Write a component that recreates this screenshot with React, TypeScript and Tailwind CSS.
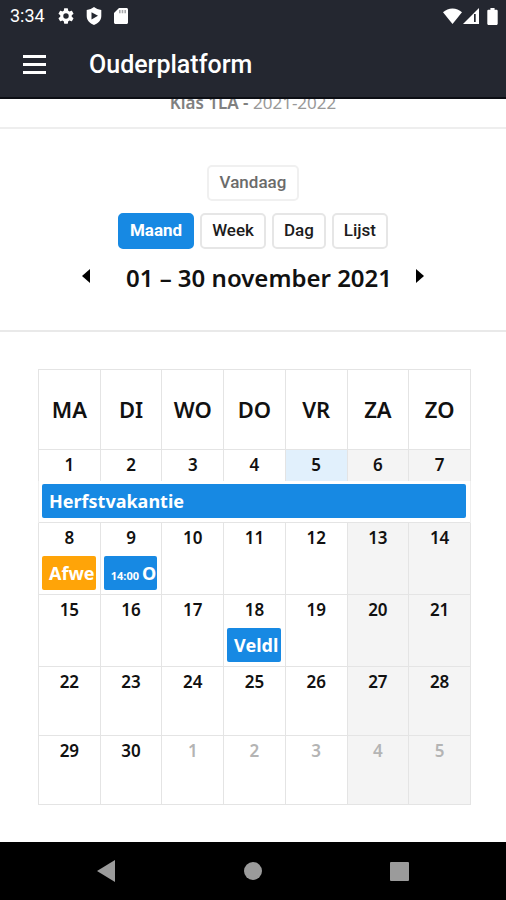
import { clsx } from 'clsx'

type CalendarEvent = {
  title: string
  time?: string
  color: 'blue' | 'orange'
}

type Week = {
  days: number[]
  height: string
  allWeek?: CalendarEvent
  events?: Record<number, CalendarEvent>
}

const VIEWS = ['Maand', 'Week', 'Dag', 'Lijst']
const WEEKDAYS = ['MA', 'DI', 'WO', 'DO', 'VR', 'ZA', 'ZO']
const TODAY = 5

const WEEKS: Week[] = [
  {
    days: [1, 2, 3, 4, 5, 6, 7],
    height: 'h-[31px]',
    allWeek: { title: 'Herfstvakantie', color: 'blue' },
  },
  {
    days: [8, 9, 10, 11, 12, 13, 14],
    height: 'h-[72px]',
    events: {
      8: { title: 'Afwe', color: 'orange' },
      9: { title: 'O', time: '14:00', color: 'blue' },
    },
  },
  {
    days: [15, 16, 17, 18, 19, 20, 21],
    height: 'h-[72px]',
    events: { 18: { title: 'Veldl', color: 'blue' } },
  },
  { days: [22, 23, 24, 25, 26, 27, 28], height: 'h-[69px]' },
  { days: [29, 30, 1, 2, 3, 4, 5], height: 'h-[69px]' },
]

function StatusBar() {
  return (
    <div className="flex h-8 items-center justify-between pl-[10px] pr-2 text-white">
      <div className="flex items-center">
        <span className="w-12 text-[18px] leading-8">3:34</span>
        <svg className="h-4 w-4" viewBox="2 2 20 20" fill="currentColor">
          <path d="M19.14 12.94c.04-.3.06-.61.06-.94 0-.32-.02-.64-.07-.94l2.03-1.58a.49.49 0 0 0 .12-.61l-1.92-3.32a.488.488 0 0 0-.59-.22l-2.39.96c-.5-.38-1.03-.7-1.62-.94l-.36-2.54a.484.484 0 0 0-.48-.41h-3.84c-.24 0-.43.17-.47.41l-.36 2.54c-.59.24-1.13.57-1.62.94l-2.39-.96c-.22-.08-.47 0-.59.22L2.74 8.87c-.12.21-.08.47.12.61l2.03 1.58c-.05.3-.09.63-.09.94s.02.64.07.94l-2.03 1.58a.49.49 0 0 0-.12.61l1.92 3.32c.12.22.37.29.59.22l2.39-.96c.5.38 1.03.7 1.62.94l.36 2.54c.05.24.24.41.48.41h3.84c.24 0 .44-.17.47-.41l.36-2.54c.59-.24 1.13-.56 1.62-.94l2.39.96c.22.08.47 0 .59-.22l1.92-3.32c.12-.22.07-.47-.12-.61l-2.01-1.58zM12 15.4a3.4 3.4 0 1 1 0-6.8 3.4 3.4 0 0 1 0 6.8z" />
        </svg>
        <svg className="ml-3 h-[18px] w-4" viewBox="0 0 16 18">
          <path d="M8 0C6 1.600 3.500 2.600 .7 3v6c0 4.300 3 7.300 7.300 9 4.300-1.700 7.300-4.700 7.300-9V3C12.500 2.600 10 1.600 8 0z" fill="currentColor" />
          <path d="M5.500 5.200v7.200l6.500-3.600z" fill="#242730" />
        </svg>
        <svg className="ml-3 h-4 w-[14px]" viewBox="0 0 14 16">
          <path d="M5 0h7.500c.8 0 1.500.7 1.500 1.500v13c0 .8-.7 1.500-1.500 1.500h-11C.7 16 0 15.300 0 14.500V5z" fill="currentColor" />
          <path d="M5 2h1.600v3.200H5zM7.700 2h1.600v3.200H7.700zM10.400 2H12v3.200h-1.600z" fill="#242730" opacity=".4" />
        </svg>
      </div>
      <div className="flex items-center">
        <svg className="h-4 w-[19px]" viewBox="0 0 19 16" fill="currentColor">
          <path d="M9.500 16 0 4.200C2.600 1.700 6 .4 9.500.4S16.400 1.700 19 4.200z" />
        </svg>
        <svg className="ml-px h-4 w-4" viewBox="0 0 16 16">
          <path d="M16 0v16H0z" fill="currentColor" />
          <path d="M11 6h1.700v8H11z" fill="#242730" />
        </svg>
        <svg className="ml-2 h-[17px] w-[11px]" viewBox="0 0 11 18" fill="currentColor">
          <path d="M3.300 0h4.400v1.800h2c.7 0 1.300.6 1.300 1.300v13.600c0 .7-.6 1.300-1.300 1.300H1.300C.6 18 0 17.400 0 16.700V3.100c0-.7.6-1.300 1.300-1.300h2z" />
        </svg>
      </div>
    </div>
  )
}

function Header() {
  return (
    <header className="relative z-10 border-b-2 border-[#0c0e14] bg-[#242730] font-[Roboto,sans-serif]">
      <StatusBar />
      <div className="flex h-[65px] items-center px-[23px] pb-1 pt-1 text-white">
        <button aria-label="Menu" className="mr-[43px] flex w-[23px] flex-col gap-[5px]">
          <span className="h-[3px] w-full bg-white" />
          <span className="h-[3px] w-full bg-white" />
          <span className="h-[3px] w-full bg-white" />
        </button>
        <h1 className="text-[25px] font-medium leading-8">Ouderplatform</h1>
      </div>
    </header>
  )
}

function Toolbar() {
  return (
    <section className="flex flex-col items-center border-b-2 border-[#e9e9e9] pb-9 pt-9">
      <button
        disabled
        className="h-9 rounded-[5px] border-2 border-[#f0f0f0] px-[11px] font-[Roboto,sans-serif] text-[17px] font-medium text-[#6b6b6b]"
      >
        Vandaag
      </button>
      <div className="mt-3 flex gap-[6px] font-[Roboto,sans-serif] text-[17px]">
        {VIEWS.map((view, i) => (
          <button
            key={view}
            className={clsx(
              'h-9 rounded-[5px] border-2 px-[10px]',
              i === 0
                ? 'border-[#1789e3] bg-[#1789e3] font-bold text-white'
                : 'border-[#e6e6e6] bg-white font-medium text-[#1c1c1c]',
            )}
          >
            {view}
          </button>
        ))}
      </div>
      <div className="mt-[13px] flex items-center">
        <button aria-label="Vorige" className="mr-9">
          <svg className="mb-1 h-4 w-2" viewBox="0 0 8 16">
            <path d="M8 1v14L0 8z" />
          </svg>
        </button>
        <h2 className="text-[24px] font-semibold leading-8 text-[#111]">01 – 30 november 2021</h2>
        <button aria-label="Volgende" className="ml-6">
          <svg className="mb-1 h-4 w-2" viewBox="0 0 8 16">
            <path d="M0 1v14l8-7z" />
          </svg>
        </button>
      </div>
    </section>
  )
}

function EventBar({ event }: { event: CalendarEvent }) {
  return (
    <a
      href="#"
      className={clsx(
        'ml-[3px] mr-1 block h-[34px] overflow-hidden whitespace-nowrap rounded-[2px] pl-[7px] text-left text-[18px] font-bold leading-[34px] text-white',
        event.color === 'blue' ? 'bg-[#1789e3]' : 'bg-[#ffa408]',
      )}
    >
      {event.time && <span className="mr-[3px] text-[11px]">{event.time}</span>}
      {event.title}
    </a>
  )
}

function WeekRows({ week, last }: { week: Week; last: boolean }) {
  return (
    <>
      <tr className={week.height}>
        {week.days.map((day, i) => (
          <td
            key={day}
            className={clsx(
              'border border-[#e4e4e4] p-0 text-center align-top text-[17px] font-semibold',
              week.allWeek && 'border-b-0',
              week.allWeek && day === TODAY && 'bg-[#e1f0fc]',
              i >= 5 && 'bg-[#f4f4f4]',
              last && day < 29 ? 'text-[#b4b4b4]' : 'text-[#111]',
            )}
          >
            <div className={clsx('pt-[3px] leading-6', week.allWeek ? 'h-[31px]' : 'h-[33px]')}>{day}</div>
            {week.events?.[day] && <EventBar event={week.events[day]} />}
          </td>
        ))}
      </tr>
      {week.allWeek && (
        <tr className="h-[41px]">
          <td colSpan={7} className="border-x border-[#efefef] p-0 pt-[3px] align-top">
            <EventBar event={week.allWeek} />
          </td>
        </tr>
      )}
    </>
  )
}

function Calendar() {
  return (
    <table className="w-full table-fixed border-collapse">
      <thead>
        <tr className="h-20">
          {WEEKDAYS.map((name) => (
            <th key={name} className="border border-[#e4e4e4] p-0 text-[22px] font-semibold text-[#111]">
              {name}
            </th>
          ))}
        </tr>
      </thead>
      <tbody>
        {WEEKS.map((week, i) => (
          <WeekRows key={i} week={week} last={i === WEEKS.length - 1} />
        ))}
      </tbody>
    </table>
  )
}

function NavigationBar() {
  return (
    <nav className="flex h-[58px] items-center justify-between bg-black px-[97px] text-[#9b9b9b]">
      <button aria-label="Terug">
        <svg className="h-[22px] w-[18px]" viewBox="0 0 18 22" fill="currentColor">
          <path d="M18 0v22L0 11z" />
        </svg>
      </button>
      <button aria-label="Start" className="h-[18px] w-[18px] rounded-full bg-[#9b9b9b]" />
      <button aria-label="Overzicht" className="h-[19px] w-[19px] rounded-[1px] bg-[#9b9b9b]" />
    </nav>
  )
}

export default function App() {
  return (
    <div className="flex min-h-screen flex-col bg-white font-['Noto_Sans',sans-serif]">
      <Header />
      <main className="flex-1">
        <p className="-mt-2 border-b-2 border-[#eeeeee] pb-3 text-center text-[17px] leading-6 text-[#999]">
          <b className="font-semibold text-[#808080]">Klas 1LA - </b>
          2021-2022
        </p>
        <Toolbar />
        <section className="pb-[35px] pl-[38px] pr-[35px] pt-[37px]">
          <Calendar />
        </section>
      </main>
      <NavigationBar />
    </div>
  )
}
